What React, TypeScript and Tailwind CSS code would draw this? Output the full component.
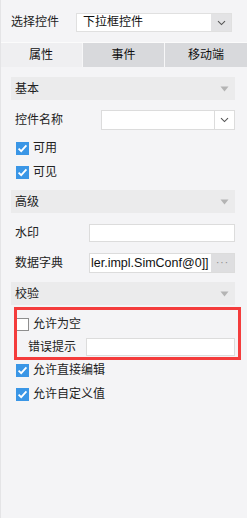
import React from "react";

const Chevron = () => (
  <svg width="9" height="6" viewBox="0 0 9 6" fill="none">
    <path d="M1 1.2 L4.5 4.6 L8 1.2" stroke="#555" strokeWidth="1.1" />
  </svg>
);

const Tri = () => (
  <svg width="9" height="6" viewBox="0 0 9 6">
    <path d="M0.5 0.5 H8.5 L4.5 5.5 Z" fill="#b4b4b4" />
  </svg>
);

const Check = ({ checked }: { checked: boolean }) =>
  checked ? (
    <svg width="13" height="13" viewBox="0 0 13 13" className="shrink-0">
      <rect width="13" height="13" fill="#3a96e6" />
      <path d="M2.6 6.6 L5.2 9.2 L10.4 3.4" stroke="#fff" strokeWidth="1.8" fill="none" />
    </svg>
  ) : (
    <svg width="13" height="13" viewBox="0 0 13 13" className="shrink-0">
      <rect x="0.5" y="0.5" width="12" height="12" fill="#fff" stroke="#8e8e8e" />
    </svg>
  );

const Header = ({ title }: { title: string }) => (
  <div className="h-[23px] bg-[#ebebec] flex items-center justify-between pl-[4px] pr-[6px] text-[#222]">
    <span>{title}</span>
    <Tri />
  </div>
);

const CheckRow = ({ label, checked }: { label: string; checked: boolean }) => (
  <div className="h-[24px] flex items-center gap-[4px] pl-[5px]">
    <Check checked={checked} />
    <span className="text-[#222]">{label}</span>
  </div>
);

export default function App() {
  return (
    <div
      className="w-[247px] h-[518px] bg-[#f4f4f6] text-[12px] leading-none border-l border-[#e4e4e6] overflow-hidden relative"
      style={{ fontFamily: '"Liberation Sans", "Noto Sans CJK SC", sans-serif' }}
    >
      {/* top select */}
      <div className="h-[42px] flex items-start pt-[13px] pl-[10px] pr-[15px]">
        <span className="w-[65px] leading-[19px] text-[#222]">选择控件</span>
        <div className="flex-1 h-[19px] flex bg-white border border-[#e0e0e0]">
          <span className="flex-1 pl-[6px] leading-[17px] text-[#111]">下拉框控件</span>
          <div className="w-[20px] bg-[#e3e3e5] flex items-center justify-center">
            <Chevron />
          </div>
        </div>
      </div>
      {/* tabs */}
      <div className="h-[25px] flex gap-[1px] bg-[#f7f7f8] border-t border-[#fbfbfb] -ml-[1px]">
        <div className="w-[82px] bg-[#efeff1] flex items-center justify-center text-[#111]">属性</div>
        <div className="w-[81px] bg-[#d8d9dc] flex items-center justify-center text-[#111]">事件</div>
        <div className="w-[82px] bg-[#d8d9dc] flex items-center justify-center text-[#111]">移动端</div>
      </div>
      {/* content */}
      <div className="pl-[10px] pr-[12px] pt-[10px] flex flex-col">
        <Header title="基本" />
        <div className="mt-[10px] h-[20px] flex items-center">
          <span className="w-[90px] pl-[4px] text-[#222]">控件名称</span>
          <div className="flex-1 h-[20px] flex bg-white border border-[#dcdcdc]">
            <div className="flex-1" />
            <div className="w-[20px] border-l border-[#dcdcdc] flex items-center justify-center">
              <Chevron />
            </div>
          </div>
        </div>
        <div className="mt-[6px]">
          <CheckRow label="可用" checked />
          <CheckRow label="可见" checked />
        </div>
        <div className="mt-[6px]">
          <Header title="高级" />
        </div>
        <div className="mt-[11px] h-[18px] flex items-center">
          <span className="w-[78px] pl-[4px] text-[#222]">水印</span>
          <div className="flex-1 h-[18px] bg-white border border-[#dcdcdc]" />
        </div>
        <div className="mt-[11px] h-[20px] flex items-center">
          <span className="w-[78px] pl-[4px] text-[#222]">数据字典</span>
          <div className="flex-1 h-[20px] flex bg-white border border-[#dcdcdc]">
            <div className="flex-1 overflow-hidden whitespace-nowrap pl-[1px] leading-[18px] text-[12.5px] text-[#111]">
              ler.impl.SimConf@0]]
            </div>
            <div className="w-[23px] bg-[#dedee0] flex items-center justify-center text-[#888] text-[10px] tracking-[1px]">
              ···
            </div>
          </div>
        </div>
        <div className="mt-[9px]">
          <Header title="校验" />
        </div>
        <div className="mt-[7px]">
          <CheckRow label="允许为空" checked={false} />
        </div>
        <div className="h-[20px] flex items-center mt-[1px]">
          <span className="w-[75px] pl-[17px] text-[#222]">错误提示</span>
          <div className="flex-1 h-[18px] bg-white border border-[#dcdcdc]" />
        </div>
        <div className="mt-[1px]">
          <CheckRow label="允许直接编辑" checked />
          <CheckRow label="允许自定义值" checked />
        </div>
      </div>
      {/* red annotation box */}
      <div className="absolute left-[13px] top-[307px] w-[227px] h-[53px] border-[3px] border-[#f43c3c] pointer-events-none" />
    </div>
  );
}
